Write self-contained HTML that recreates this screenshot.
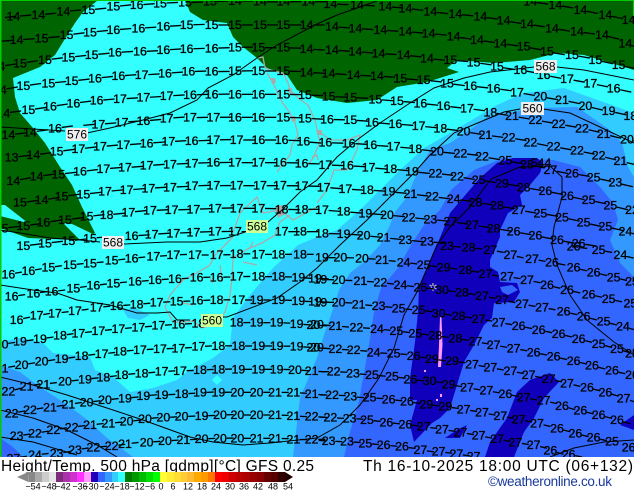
<!DOCTYPE html>
<html><head><meta charset="utf-8"><style>
html,body{margin:0;padding:0;background:#fff;width:634px;height:490px;overflow:hidden}
svg{display:block}
.q text{font-family:"Liberation Sans",sans-serif;font-size:37px;text-anchor:middle;dominant-baseline:central;fill:#000;stroke:#000;stroke-width:1}
.q polyline{fill:none;stroke:none}
.w polyline{marker:url(#w)}
.n polyline{marker:url(#n)}
.c{fill:none;stroke:#000;stroke-width:1}
.s{fill:none;stroke:#aaa;stroke-width:1.3}
.f{font-family:"Liberation Sans",sans-serif;fill:#000}
.l{font-family:"Liberation Sans",sans-serif;font-size:9px;text-anchor:middle;fill:#000}
</style></head><body>
<svg width="634" height="490" viewBox="0 0 634 490" xmlns="http://www.w3.org/2000/svg">
<defs>
<clipPath id="m"><rect x="0" y="0" width="634" height="457"/></clipPath>
<marker id="w" markerUnits="userSpaceOnUse" orient="auto" markerWidth="70" markerHeight="10" refX="0" refY="5" overflow="visible"><path d="M20 5H54" stroke="#000" stroke-width="4"/></marker>
<marker id="n" markerUnits="userSpaceOnUse" orient="auto" markerWidth="70" markerHeight="10" refX="0" refY="5" overflow="visible"><path d="M20 5H41" stroke="#000" stroke-width="4"/></marker>
</defs>
<g clip-path="url(#m)">
<rect width="634" height="457" fill="#33ffff"/>
<polygon fill="#33ccff" points="0,342 20,338 43,343 53,353 90,357 95,370 113,377 130,392 153,388 177,380 187,372 213,358 230,345 233,318 250,295 273,268 298,245 317,237 337,230 360,210 380,190 400,170 424,148 450,133 497,105 524,93 564,88 634,113 634,457 0,457"/>
<polygon fill="#33ffff" points="212,380 217,375 222,380 217,385"/>
<polygon fill="#33ccff" points="123,310 135,308 150,315 140,320 128,318"/>
<polygon fill="#3399ff" points="380,245 390,225 395,212 407,197 417,173 430,150 450,143 470,130 487,117 534,108 577,107 610,130 622,143 628,167 634,177 634,457 293,457 300,398 317,358 324,335 332,312 339,290 350,273 364,262"/>
<polygon fill="#3399ff" points="0,365 20,372 37,385 63,402 85,418 107,438 133,457 0,457"/>
<polygon fill="#3366ff" points="0,438 13,447 23,457 0,457"/>
<polygon fill="#3366ff" points="411,245 424,225 440,210 451,190 474,170 504,158 553,160 580,167 600,187 613,203 618,220 610,240 620,263 634,277 634,457 344,457 350,432 359,401 369,345 374,312 381,288 398,268"/>
<polygon fill="#1100bb" points="437,245 450,213 467,193 480,178 497,163 513,158 537,158 543,163 540,173 530,185 520,195 522,205 508,213 500,230 500,237 490,260 490,267 498,272 500,282 517,283 520,292 514,302 494,303 492,318 484,325 474,345 464,362 457,385 450,408 440,418 432,423 414,442 410,425 417,400 410,400 410,378 415,342 418,312 419,288 427,268"/>
<polygon fill="#1100bb" points="445,438 457,430 467,425 460,438"/>
<polygon fill="#1100bb" points="485,457 490,442 507,418 517,392 530,380 550,373 559,382 544,398 534,418 524,432 514,457"/>
<polygon fill="#1100bb" points="620,425 634,415 634,430"/>
<polygon fill="#3366ff" points="500,287 512,285 518,290 508,295 502,292"/>
<polygon fill="#006400" points="97,1 83,12 75,23 63,42 55,55 40,67 13,78 15,97 20,113 33,128 45,143 60,167 72,185 82,207 95,233 78,240 28,238 0,228 0,216 28,223 5,205 0,205 0,0"/>
<polygon fill="#006400" points="185,0 190,12 203,20 227,23 233,37 243,47 257,58 267,68 287,75 297,90 317,98 347,103 377,100 397,87 427,82 459,72 447,68 457,60 494,63 530,60 557,53 584,55 634,70 634,0"/>
<polygon fill="#33ffff" points="63,223 72,224 95,235 80,240"/>

<polyline class="s" points="258,58 263,57 265,68 270,70 283,73 288,83 290,90 298,98 308,105 315,120 318,135 320,142 313,158 308,165"/>
<polyline class="s" points="267,73 273,83 282,102 290,113 295,123 298,135 292,145 290,155 277,172"/>
<polyline class="s" points="312,157 317,155 318,160"/>
<polyline class="s" points="233,233 240,213 257,197 263,213 280,210 293,220 317,207"/>
<polyline class="s" points="317,130 330,140 347,140 360,135 357,150 347,170 334,170 327,190 317,203"/>
<polyline class="s" points="253,242 250,248 240,253 233,258 232,278 230,295 225,312 218,323 202,328 193,321 183,322 173,322 168,313 165,307 170,295 183,280 193,275 210,265 215,255 233,237"/>
<polyline class="s" points="220,265 222,282"/>
<polyline class="s" points="210,278 213,283"/>
<polyline class="s" points="183,303 193,305"/>
<polyline class="s" points="243,262 257,265"/>
<polyline class="s" points="250,248 262,243 275,235 280,222 290,215"/>
<polygon fill="#aaa" points="275,207 282,205 285,214 278,218"/>
<polygon fill="#aaa" points="271,78 275,78 276,83 272,84"/>
<polygon fill="#aaa" points="288,88 292,88 292,94 289,93"/>
<polygon fill="#aaa" points="291,116 295,116 296,121 292,122"/>
<polygon fill="#aaa" points="317,130 322,130 322,135 318,135"/>
<polygon fill="#ff99ff" points="440,317 441.5,317 442.5,345 441,367 438,367 439,345"/>
<rect x="424" y="370" width="2" height="2" fill="#ff99ff"/><rect x="440" y="394" width="2" height="3" fill="#ff99ff"/><rect x="436" y="399" width="2" height="2" fill="#ff99ff"/>
<text x="433" y="291" font-family="Liberation Sans" font-size="11" fill="#aaa" text-anchor="middle">✲</text>

<g class="c">
<polyline points="0,127 65,131"/>
<polyline points="87,133 110,128 143,120 170,113 197,100 208,88 233,75 257,58 277,45 317,24 337,15 377,1"/>
<polyline points="0,230 20,233 50,238 80,240 100,242"/>
<polyline points="124,244 167,242 200,242 227,238 245,232"/>
<polyline points="268,222 282,210 300,192 317,180 337,157 357,140 380,123 410,103 434,88 464,78 490,72 517,69 534,67"/>
<polyline points="557,67 584,70 634,80"/>
<polyline points="0,285 33,290 57,293 77,300 110,305 137,313 157,313 170,312 177,320 187,320 190,320"/>
<polyline points="202,317 227,317 277,298 300,282 317,268 340,245 367,220 387,200 414,173 430,155 454,133 480,122 504,112 520,109"/>
<polyline points="543,109 570,113 600,127 634,143"/>
<polyline points="0,377 33,385 67,395 113,410 143,420 190,437 213,442 243,445 270,443 317,438 340,425 360,405 379,378 394,348 404,315 417,292 437,245 450,227 470,207 491,179 520,167 550,166 562,177 562,197 554,227 552,245 557,265 570,295 587,320 614,342 634,355"/>
<polyline points="0,410 33,418 67,430 97,445 117,457"/>
<polyline points="0,437 33,442 77,455"/>
<polyline points="550,457 574,448 604,442 634,440"/>
</g>

<g class="q w" transform="scale(.33333)">
<polyline points="-5,55 40,50 115,45 190,35 265,30 340,20 410,15 480,10 555,8 630,5 705,3 780,5 850,5 925,5"/>
<text x="40" y="50">14</text><text x="115" y="45">14</text><text x="190" y="35">14</text><text x="265" y="30">15</text><text x="340" y="20">15</text><text x="410" y="15">16</text><text x="480" y="10">15</text><text x="555" y="8">15</text><text x="630" y="5">15</text><text x="705" y="3">14</text><text x="780" y="5">14</text><text x="850" y="5">14</text><text x="925" y="5">14</text>
<polyline points="-15,125 50,120 125,115 200,105 270,97 340,90 415,85 490,80 560,75 635,75 705,75 780,75 850,75 920,75"/>
<text x="50" y="120">14</text><text x="125" y="115">15</text><text x="200" y="105">15</text><text x="270" y="97">15</text><text x="340" y="90">16</text><text x="415" y="85">16</text><text x="490" y="80">16</text><text x="560" y="75">15</text><text x="635" y="75">15</text><text x="705" y="75">15</text><text x="780" y="75">15</text><text x="850" y="75">15</text><text x="920" y="75">14</text>
<polyline points="-5,200 60,190 135,180 205,172 275,165 345,158 420,155 490,150 560,147 635,145 705,142 775,143 850,143 920,147"/>
<text x="-5" y="200">14</text><text x="60" y="190">15</text><text x="135" y="180">15</text><text x="205" y="172">15</text><text x="275" y="165">15</text><text x="345" y="158">16</text><text x="420" y="155">16</text><text x="490" y="150">16</text><text x="560" y="147">16</text><text x="635" y="145">16</text><text x="705" y="142">15</text><text x="775" y="143">15</text><text x="850" y="143">15</text><text x="920" y="147">14</text>
<polyline points="0,270 70,258 145,250 215,243 285,235 355,228 425,225 495,220 565,215 635,215 705,213 775,213 850,213 920,217"/>
<text x="0" y="270">14</text><text x="70" y="258">15</text><text x="145" y="250">15</text><text x="215" y="243">15</text><text x="285" y="235">16</text><text x="355" y="228">16</text><text x="425" y="225">17</text><text x="495" y="220">16</text><text x="565" y="215">16</text><text x="635" y="215">16</text><text x="705" y="213">15</text><text x="775" y="213">15</text><text x="850" y="213">15</text><text x="920" y="217">14</text>
<polyline points="10,340 85,330 150,320 220,310 290,302 360,297 430,293 500,288 570,285 635,283 705,283 775,283 850,283 915,285"/>
<text x="10" y="340">14</text><text x="85" y="330">15</text><text x="150" y="320">16</text><text x="220" y="310">16</text><text x="290" y="302">16</text><text x="360" y="297">17</text><text x="430" y="293">17</text><text x="500" y="288">17</text><text x="570" y="285">16</text><text x="635" y="283">16</text><text x="705" y="283">16</text><text x="775" y="283">16</text><text x="850" y="283">15</text><text x="915" y="285">15</text>
<polyline points="25,405 90,397 165,385 230,378 295,373 365,367 430,363 500,355 570,353 640,352 705,352 775,352 850,352 915,355"/>
<text x="25" y="405">14</text><text x="90" y="397">14</text><text x="165" y="385">16</text><text x="295" y="373">17</text><text x="365" y="367">17</text><text x="430" y="363">16</text><text x="500" y="355">17</text><text x="570" y="353">17</text><text x="640" y="352">17</text><text x="705" y="352">16</text><text x="775" y="352">16</text><text x="850" y="352">15</text><text x="915" y="355">15</text>
<polyline points="35,472 100,465 170,455 235,447 300,440 370,435 440,430 505,425 575,423 640,420 710,420 775,420 845,420 910,425"/>
<text x="35" y="472">13</text><text x="100" y="465">14</text><text x="170" y="455">15</text><text x="235" y="447">17</text><text x="300" y="440">17</text><text x="370" y="435">17</text><text x="440" y="430">16</text><text x="505" y="425">17</text><text x="575" y="423">16</text><text x="640" y="420">17</text><text x="710" y="420">17</text><text x="775" y="420">16</text><text x="845" y="420">16</text><text x="910" y="425">16</text>
<polyline points="40,543 110,530 175,523 240,515 310,507 375,503 440,497 510,493 575,490 640,488 705,488 775,488 840,488 905,490"/>
<text x="40" y="543">14</text><text x="110" y="530">14</text><text x="175" y="523">15</text><text x="240" y="515">16</text><text x="310" y="507">17</text><text x="375" y="503">17</text><text x="440" y="497">17</text><text x="510" y="493">17</text><text x="575" y="490">17</text><text x="640" y="488">16</text><text x="705" y="488">17</text><text x="775" y="488">17</text><text x="840" y="488">16</text><text x="905" y="490">16</text>
<polyline points="60,608 125,600 185,590 250,583 315,575 380,570 445,565 510,562 575,558 640,557 710,557 780,557 840,557 905,558"/>
<text x="60" y="608">15</text><text x="125" y="600">14</text><text x="185" y="590">15</text><text x="250" y="583">15</text><text x="315" y="575">17</text><text x="380" y="570">17</text><text x="445" y="565">17</text><text x="510" y="562">17</text><text x="575" y="558">17</text><text x="640" y="557">17</text><text x="710" y="557">17</text><text x="780" y="557">17</text><text x="840" y="557">17</text><text x="905" y="558">17</text>
<polyline points="5,685 70,678 130,668 195,660 260,650 320,645 385,637 450,632 515,630 580,628 645,625 710,625 775,625 845,628 905,628"/>
<text x="5" y="685">15</text><text x="70" y="678">15</text><text x="130" y="668">16</text><text x="195" y="660">15</text><text x="260" y="650">15</text><text x="320" y="645">18</text><text x="385" y="637">17</text><text x="450" y="632">17</text><text x="515" y="630">17</text><text x="580" y="628">17</text><text x="645" y="625">17</text><text x="710" y="625">17</text><text x="775" y="625">17</text><text x="845" y="628">18</text><text x="905" y="628">18</text>
<polyline points="70,738 135,730 205,723 270,715 395,708 455,703 520,700 580,697 645,695 705,695 845,695 900,695"/>
<text x="70" y="738">15</text><text x="135" y="730">15</text><text x="205" y="723">15</text><text x="270" y="715">15</text><text x="395" y="708">16</text><text x="455" y="703">17</text><text x="520" y="700">17</text><text x="580" y="697">17</text><text x="645" y="695">17</text><text x="705" y="695">17</text><text x="845" y="695">17</text><text x="900" y="695">18</text>
</g>

<g class="q w" transform="translate(317,0) scale(.33333)">
<polyline points="640,5 715,15 790,30 865,45 935,60"/>
<text x="640" y="5">14</text><text x="715" y="15">14</text><text x="790" y="30">14</text><text x="865" y="45">14</text><text x="935" y="60">14</text>
<polyline points="40,12 120,15 205,20 265,25 340,35 415,42 490,50 560,62 630,72 705,85 780,95 855,105 925,130"/>
<text x="40" y="12">14</text><text x="120" y="15">14</text><text x="205" y="20">14</text><text x="265" y="25">14</text><text x="340" y="35">14</text><text x="415" y="42">14</text><text x="490" y="50">14</text><text x="560" y="62">14</text><text x="630" y="72">14</text><text x="705" y="85">14</text><text x="780" y="95">14</text><text x="855" y="105">14</text><text x="925" y="130">14</text>
<polyline points="45,80 115,85 190,90 265,95 335,100 410,110 480,120 550,130 620,140 690,155 765,165 835,180 905,195"/>
<text x="45" y="80">14</text><text x="115" y="85">14</text><text x="190" y="90">14</text><text x="265" y="95">14</text><text x="335" y="100">14</text><text x="410" y="110">14</text><text x="480" y="120">14</text><text x="550" y="130">14</text><text x="620" y="140">15</text><text x="690" y="155">15</text><text x="765" y="165">15</text><text x="835" y="180">15</text><text x="905" y="195">15</text>
<polyline points="45,150 115,155 185,160 260,165 330,175 400,180 470,187 540,200 610,210 680,225 750,237 820,250 890,265"/>
<text x="45" y="150">14</text><text x="115" y="155">14</text><text x="185" y="160">14</text><text x="260" y="165">14</text><text x="330" y="175">14</text><text x="400" y="180">15</text><text x="470" y="187">15</text><text x="540" y="200">15</text><text x="610" y="210">16</text><text x="680" y="225">16</text><text x="750" y="237">17</text><text x="820" y="250">17</text><text x="890" y="265">16</text>
<polyline points="35,220 110,225 180,228 250,235 320,240 390,250 460,258 530,265 600,277 670,290 735,300 805,318 875,333 940,348"/>
<text x="35" y="220">14</text><text x="110" y="225">14</text><text x="180" y="228">14</text><text x="250" y="235">15</text><text x="320" y="240">15</text><text x="390" y="250">15</text><text x="460" y="258">16</text><text x="530" y="265">16</text><text x="600" y="277">17</text><text x="670" y="290">20</text><text x="735" y="300">21</text><text x="805" y="318">20</text><text x="875" y="333">19</text><text x="940" y="348">18</text>
<polyline points="35,290 100,292 175,298 240,303 310,310 380,318 450,325 520,337 585,348 655,360 725,372 795,385 860,402 930,418"/>
<text x="35" y="290">15</text><text x="100" y="292">15</text><text x="175" y="298">15</text><text x="240" y="303">15</text><text x="310" y="310">16</text><text x="380" y="318">16</text><text x="450" y="325">17</text><text x="520" y="337">18</text><text x="585" y="348">21</text><text x="655" y="360">22</text><text x="725" y="372">22</text><text x="795" y="385">22</text><text x="860" y="402">21</text><text x="930" y="418">20</text>
<polyline points="30,358 100,360 165,367 235,372 305,378 370,385 440,395 505,405 575,413 640,427 710,440 780,452 845,467 910,483"/>
<text x="30" y="358">16</text><text x="100" y="360">15</text><text x="165" y="367">16</text><text x="235" y="372">16</text><text x="305" y="378">17</text><text x="370" y="385">18</text><text x="440" y="395">20</text><text x="505" y="405">21</text><text x="575" y="413">22</text><text x="640" y="427">22</text><text x="710" y="440">22</text><text x="780" y="452">22</text><text x="845" y="467">22</text><text x="910" y="483">21</text>
<polyline points="25,428 95,430 160,435 230,440 295,447 360,455 430,460 495,470 565,482 630,493 700,510 765,520 830,533 895,548"/>
<text x="25" y="428">16</text><text x="95" y="430">16</text><text x="160" y="435">16</text><text x="230" y="440">17</text><text x="295" y="447">18</text><text x="360" y="455">20</text><text x="430" y="460">22</text><text x="495" y="470">22</text><text x="565" y="482">25</text><text x="630" y="493">28</text><text x="672" y="489">544</text><text x="700" y="510">27</text><text x="765" y="520">26</text><text x="830" y="533">25</text><text x="895" y="548">23</text>
<polyline points="25,495 90,497 155,503 220,507 285,515 355,520 420,530 485,540 555,550 620,562 685,573 750,588 815,600 880,617 945,630"/>
<text x="25" y="495">17</text><text x="90" y="497">16</text><text x="155" y="503">17</text><text x="220" y="507">18</text><text x="285" y="515">19</text><text x="355" y="520">22</text><text x="420" y="530">22</text><text x="485" y="540">25</text><text x="555" y="550">29</text><text x="620" y="562">28</text><text x="685" y="573">26</text><text x="750" y="588">26</text><text x="815" y="600">25</text><text x="880" y="617">25</text><text x="945" y="630">22</text>
<polyline points="20,562 85,567 150,570 215,575 280,582 345,590 410,597 475,607 540,617 605,630 670,640 735,652 800,668 865,680 925,695"/>
<text x="20" y="562">17</text><text x="85" y="567">17</text><text x="150" y="570">18</text><text x="215" y="575">19</text><text x="280" y="582">21</text><text x="345" y="590">22</text><text x="410" y="597">24</text><text x="475" y="607">28</text><text x="540" y="617">28</text><text x="605" y="630">27</text><text x="670" y="640">25</text><text x="735" y="652">25</text><text x="800" y="668">25</text><text x="865" y="680">25</text><text x="925" y="695">24</text>
<polyline points="15,630 80,635 145,640 210,645 275,652 340,658 400,665 465,675 530,685 590,695 655,707 720,720 785,730"/>
<text x="15" y="630">17</text><text x="80" y="635">18</text><text x="145" y="640">19</text><text x="210" y="645">20</text><text x="275" y="652">22</text><text x="340" y="658">23</text><text x="400" y="665">27</text><text x="465" y="675">27</text><text x="530" y="685">28</text><text x="590" y="695">26</text><text x="655" y="707">26</text><text x="720" y="720">26</text><text x="785" y="730">26</text>
<polyline points="15,700 80,702 140,707 200,713 265,720 330,725"/>
<text x="15" y="700">18</text><text x="80" y="702">19</text><text x="140" y="707">20</text><text x="200" y="713">21</text><text x="265" y="720">23</text><text x="330" y="725">23</text>
</g>

<g class="q n" transform="translate(0,245) scale(.33333)">
<polyline points="25,88 85,78 145,68 210,60 270,55 335,47 395,40 460,35 520,30 585,30 650,30 710,27 775,28 835,28 900,28"/>
<text x="25" y="88">16</text><text x="85" y="78">16</text><text x="145" y="68">15</text><text x="210" y="60">15</text><text x="270" y="55">15</text><text x="335" y="47">15</text><text x="395" y="40">16</text><text x="460" y="35">17</text><text x="520" y="30">17</text><text x="585" y="30">17</text><text x="650" y="30">17</text><text x="710" y="27">18</text><text x="775" y="28">17</text><text x="835" y="28">18</text><text x="900" y="28">18</text>
<polyline points="35,155 100,145 155,140 220,130 280,122 340,115 405,110 465,105 525,102 590,98 650,97 710,95 775,95 835,95 895,98 945,100"/>
<text x="35" y="155">16</text><text x="100" y="145">16</text><text x="155" y="140">16</text><text x="220" y="130">15</text><text x="280" y="122">16</text><text x="340" y="115">15</text><text x="405" y="110">16</text><text x="465" y="105">16</text><text x="525" y="102">16</text><text x="590" y="98">16</text><text x="650" y="97">16</text><text x="710" y="95">17</text><text x="775" y="95">18</text><text x="835" y="95">18</text><text x="895" y="98">19</text><text x="945" y="100">19</text>
<polyline points="50,225 110,212 165,205 225,198 290,188 350,183 410,178 470,173 530,170 590,167 650,165 715,165 770,165 835,165 895,168 945,170"/>
<text x="50" y="225">16</text><text x="110" y="212">17</text><text x="165" y="205">17</text><text x="225" y="198">17</text><text x="290" y="188">17</text><text x="350" y="183">16</text><text x="410" y="178">18</text><text x="470" y="173">17</text><text x="530" y="170">15</text><text x="590" y="167">16</text><text x="650" y="165">18</text><text x="715" y="165">17</text><text x="770" y="165">19</text><text x="835" y="165">19</text><text x="895" y="168">19</text><text x="945" y="170">19</text>
<polyline points="5,298 60,290 120,282 180,272 235,265 295,258 355,252 415,247 475,242 535,238 595,235 710,233 770,233 830,233 890,237 940,240"/>
<text x="5" y="298">20</text><text x="60" y="290">19</text><text x="120" y="282">19</text><text x="180" y="272">18</text><text x="235" y="265">17</text><text x="295" y="258">17</text><text x="355" y="252">17</text><text x="415" y="247">17</text><text x="475" y="242">17</text><text x="535" y="238">16</text><text x="595" y="235">18</text><text x="710" y="233">18</text><text x="770" y="233">19</text><text x="830" y="233">19</text><text x="890" y="237">19</text><text x="940" y="240">20</text>
<polyline points="5,370 65,360 125,350 185,342 245,333 305,327 360,320 420,315 480,312 535,310 595,305 655,303 715,303 775,303 830,303 890,305 940,308"/>
<text x="5" y="370">21</text><text x="65" y="360">20</text><text x="125" y="350">20</text><text x="185" y="342">19</text><text x="245" y="333">18</text><text x="305" y="327">17</text><text x="360" y="320">18</text><text x="420" y="315">17</text><text x="480" y="312">17</text><text x="535" y="310">17</text><text x="595" y="305">17</text><text x="655" y="303">18</text><text x="715" y="303">18</text><text x="775" y="303">19</text><text x="830" y="303">19</text><text x="890" y="305">19</text><text x="940" y="308">20</text>
<polyline points="25,440 80,425 130,418 195,410 255,403 310,397 365,390 425,385 485,380 540,378 600,375 655,373 715,373 775,373 830,373 885,375 935,378"/>
<text x="25" y="440">22</text><text x="80" y="425">21</text><text x="130" y="418">21</text><text x="195" y="410">20</text><text x="255" y="403">19</text><text x="310" y="397">18</text><text x="365" y="390">18</text><text x="425" y="385">18</text><text x="485" y="380">17</text><text x="540" y="378">17</text><text x="600" y="375">18</text><text x="655" y="373">18</text><text x="715" y="373">19</text><text x="775" y="373">19</text><text x="830" y="373">19</text><text x="885" y="375">20</text><text x="935" y="378">21</text>
<polyline points="35,505 90,495 150,487 205,478 260,472 315,465 375,460 430,453 485,450 545,447 600,443 655,442 712,442 770,442 825,442 880,443 935,447"/>
<text x="35" y="505">22</text><text x="90" y="495">22</text><text x="150" y="487">21</text><text x="205" y="478">21</text><text x="260" y="472">20</text><text x="315" y="465">20</text><text x="375" y="460">19</text><text x="430" y="453">19</text><text x="485" y="450">19</text><text x="545" y="447">18</text><text x="600" y="443">19</text><text x="655" y="442">19</text><text x="712" y="442">20</text><text x="770" y="442">20</text><text x="825" y="442">21</text><text x="880" y="443">21</text><text x="935" y="447">21</text>
<polyline points="50,573 105,565 160,555 215,547 270,540 325,535 380,530 435,522 490,518 545,515 605,513 660,510 712,510 770,510 825,510 880,513 935,515"/>
<text x="50" y="573">23</text><text x="105" y="565">22</text><text x="160" y="555">22</text><text x="215" y="547">22</text><text x="270" y="540">21</text><text x="325" y="535">21</text><text x="380" y="530">20</text><text x="435" y="522">20</text><text x="490" y="518">20</text><text x="545" y="515">20</text><text x="605" y="513">19</text><text x="660" y="510">20</text><text x="712" y="510">20</text><text x="770" y="510">20</text><text x="825" y="510">21</text><text x="880" y="513">21</text><text x="935" y="515">22</text>
<polyline points="40,640 105,630 170,625 225,615 280,608 335,603 375,597 440,592 495,588 550,585 605,582 660,580 712,580 770,580 825,580 880,583 935,583"/>
<text x="40" y="640">27</text><text x="105" y="630">24</text><text x="170" y="625">23</text><text x="225" y="615">23</text><text x="280" y="608">22</text><text x="335" y="603">22</text><text x="375" y="597">21</text><text x="440" y="592">20</text><text x="495" y="588">20</text><text x="550" y="585">21</text><text x="605" y="582">20</text><text x="660" y="580">20</text><text x="712" y="580">20</text><text x="770" y="580">21</text><text x="825" y="580">21</text><text x="880" y="583">21</text><text x="935" y="583">22</text>
</g>

<g class="q n" transform="translate(317,245) scale(.33333)">
<polyline points="390,3 455,8 520,15 580,30 645,42 705,52 770,68 830,82 890,97 945,110"/>
<text x="390" y="3">23</text><text x="455" y="8">28</text><text x="520" y="15">27</text><text x="580" y="30">27</text><text x="645" y="42">27</text><text x="705" y="52">26</text><text x="770" y="68">26</text><text x="830" y="82">26</text><text x="890" y="97">25</text><text x="945" y="110">25</text>
<polyline points="770,5 845,15 910,30"/>
<text x="770" y="5">26</text><text x="845" y="15">25</text><text x="910" y="30">24</text>
<polyline points="15,38 70,38 135,40 195,45 260,52 320,60 380,67 445,75 505,87 570,95 630,105 690,120 750,135 815,148 875,162 940,175"/>
<text x="15" y="38">19</text><text x="70" y="38">20</text><text x="135" y="40">20</text><text x="195" y="45">21</text><text x="260" y="52">24</text><text x="320" y="60">25</text><text x="380" y="67">29</text><text x="445" y="75">28</text><text x="505" y="87">27</text><text x="570" y="95">27</text><text x="630" y="105">27</text><text x="690" y="120">26</text><text x="750" y="135">26</text><text x="815" y="148">26</text><text x="875" y="162">25</text><text x="940" y="175">25</text>
<polyline points="10,103 65,105 130,108 190,113 250,120 310,127 375,135 435,143 495,153 555,165 615,177 675,187 740,200 800,215 860,230 918,245"/>
<text x="10" y="103">19</text><text x="65" y="105">20</text><text x="130" y="108">21</text><text x="190" y="113">22</text><text x="250" y="120">24</text><text x="310" y="127">26</text><text x="375" y="135">30</text><text x="435" y="143">28</text><text x="495" y="153">27</text><text x="555" y="165">27</text><text x="615" y="177">27</text><text x="675" y="187">27</text><text x="740" y="200">26</text><text x="800" y="215">26</text><text x="860" y="230">25</text><text x="918" y="245">24</text>
<polyline points="10,172 65,172 125,178 185,183 245,190 305,195 365,205 425,213 485,222 545,232 605,243 665,255 725,267 785,282 845,297 900,312 945,325"/>
<text x="10" y="172">19</text><text x="65" y="172">20</text><text x="125" y="178">21</text><text x="185" y="183">23</text><text x="245" y="190">25</text><text x="305" y="195">25</text><text x="365" y="205">30</text><text x="425" y="213">28</text><text x="485" y="222">27</text><text x="545" y="232">27</text><text x="605" y="243">26</text><text x="665" y="255">26</text><text x="725" y="267">26</text><text x="785" y="282">26</text><text x="845" y="297">25</text><text x="900" y="312">25</text><text x="945" y="325">25</text>
<polyline points="0,238 55,243 118,247 180,252 238,258 295,265 355,272 415,280 475,290 530,300 590,310 650,322 710,335 770,348 825,362 885,377 945,390"/>
<text x="0" y="238">20</text><text x="55" y="243">21</text><text x="118" y="247">22</text><text x="180" y="252">24</text><text x="238" y="258">25</text><text x="295" y="265">25</text><text x="355" y="272">28</text><text x="415" y="280">28</text><text x="475" y="290">27</text><text x="530" y="300">27</text><text x="590" y="310">27</text><text x="650" y="322">26</text><text x="710" y="335">26</text><text x="770" y="348">26</text><text x="825" y="362">26</text><text x="885" y="377">26</text><text x="945" y="390">26</text>
<polyline points="0,308 55,312 110,315 170,322 230,325 290,333 345,342 405,348 465,358 520,368 580,378 635,390 695,402 750,415 810,428 865,442 920,460"/>
<text x="0" y="308">20</text><text x="55" y="312">22</text><text x="110" y="315">22</text><text x="170" y="322">24</text><text x="230" y="325">25</text><text x="290" y="333">26</text><text x="345" y="342">29</text><text x="405" y="348">29</text><text x="465" y="358">27</text><text x="520" y="368">27</text><text x="580" y="378">27</text><text x="635" y="390">27</text><text x="695" y="402">27</text><text x="750" y="415">27</text><text x="810" y="428">26</text><text x="865" y="442">26</text><text x="920" y="460">27</text>
<polyline points="-5,380 50,380 108,385 165,390 225,395 280,403 338,408 395,418 450,428 508,437 565,447 620,458 680,467 735,483 790,497 845,510 900,525"/>
<text x="50" y="380">22</text><text x="108" y="385">23</text><text x="165" y="390">25</text><text x="225" y="395">25</text><text x="280" y="403">26</text><text x="338" y="408">30</text><text x="395" y="418">29</text><text x="450" y="428">27</text><text x="508" y="437">27</text><text x="565" y="447">26</text><text x="620" y="458">27</text><text x="680" y="467">27</text><text x="735" y="483">26</text><text x="790" y="497">26</text><text x="845" y="510">26</text><text x="900" y="525">26</text>
<polyline points="-10,450 45,450 100,455 158,458 215,463 270,470 328,478 385,485 440,493 495,503 550,513 605,523 660,535 720,550 775,565 830,578"/>
<text x="45" y="450">22</text><text x="100" y="455">23</text><text x="158" y="458">25</text><text x="215" y="463">26</text><text x="270" y="470">26</text><text x="328" y="478">29</text><text x="385" y="485">29</text><text x="440" y="493">27</text><text x="495" y="503">27</text><text x="550" y="513">27</text><text x="605" y="523">27</text><text x="660" y="535">27</text><text x="720" y="550">26</text><text x="775" y="565">26</text><text x="830" y="578">26</text>
<polyline points="-10,515 40,518 98,520 150,525 208,532 265,538 320,545 375,553 430,562 485,572 540,582 595,592 650,600 700,617 755,628"/>
<text x="40" y="518">22</text><text x="98" y="520">23</text><text x="150" y="525">25</text><text x="208" y="532">26</text><text x="265" y="538">26</text><text x="320" y="545">27</text><text x="375" y="553">27</text><text x="430" y="562">27</text><text x="485" y="572">27</text><text x="540" y="582">27</text><text x="595" y="592">27</text><text x="650" y="600">27</text><text x="700" y="617">26</text><text x="755" y="628">26</text>
<polyline points="-15,585 35,588 90,590 145,595 200,600 255,605 310,615 365,620 418,627 470,635"/>
<text x="35" y="588">23</text><text x="90" y="590">23</text><text x="145" y="595">25</text><text x="200" y="600">26</text><text x="255" y="605">26</text><text x="310" y="615">27</text><text x="365" y="620">27</text><text x="418" y="627">27</text><text x="470" y="635">27</text>
<text x="885" y="590">25</text><text x="935" y="608">26</text>
</g>

<g font-family="Liberation Sans,sans-serif" font-size="12" text-anchor="middle">
<rect x="66" y="128" width="22" height="13" fill="#eee"/><text x="77" y="138.500">576</text>
<rect x="102" y="236" width="22" height="13" fill="#eee"/><text x="113" y="246.500">568</text>
<rect x="246" y="220" width="22" height="13" fill="#ccff99"/><text x="257" y="230.500">568</text>
<rect x="534" y="60" width="23" height="13" fill="#eee"/><text x="545.500" y="70.500">568</text>
<rect x="521" y="102" width="23" height="13" fill="#eee"/><text x="532.500" y="112.500">560</text>
<rect x="201" y="314" width="22" height="13" fill="#ccff99"/><text x="212" y="324.500">560</text>
</g>
</g>
<rect x="0" y="0" width="634" height="1" fill="#00cc00"/>
<rect x="0" y="0" width="1.500" height="457" fill="#00cc00"/>
<rect x="633" y="0" width="1" height="16" fill="#00cc00"/>

<text class="f" x="1" y="471" font-size="15.500" textLength="313" lengthAdjust="spacing">Height/Temp. 500 hPa [gdmp][°C] GFS 0.25</text>
<text class="f" x="363" y="471" font-size="15.500" textLength="270" lengthAdjust="spacing">Th 16-10-2025 18:00 UTC (06+132)</text>
<text class="f" x="488" y="486" font-size="13.500" textLength="124" lengthAdjust="spacing" style="fill:#1a3a9c">©weatheronline.co.uk</text>

<g shape-rendering="crispEdges">
<rect x="28.300" y="472" width="7" height="10" fill="#888"/><rect x="35.200" y="472" width="7" height="10" fill="#aaa"/><rect x="42.100" y="472" width="7" height="10" fill="#ccc"/><rect x="49" y="472" width="7" height="10" fill="#e5e5e5"/><rect x="56" y="472" width="7" height="10" fill="#7b2d7b"/><rect x="63" y="472" width="7" height="10" fill="#aa33aa"/><rect x="70" y="472" width="7" height="10" fill="#cc33cc"/><rect x="77" y="472" width="7" height="10" fill="#ff33ff"/><rect x="84" y="472" width="7" height="10" fill="#ff99ff"/><rect x="91" y="472" width="7" height="10" fill="#2200bb"/><rect x="98" y="472" width="7" height="10" fill="#3366ff"/><rect x="105" y="472" width="7" height="10" fill="#3399ff"/><rect x="112" y="472" width="7" height="10" fill="#33ccff"/><rect x="118" y="472" width="7" height="10" fill="#33ffff"/><rect x="125" y="472" width="7" height="10" fill="#007700"/><rect x="132" y="472" width="7" height="10" fill="#009900"/><rect x="139" y="472" width="7" height="10" fill="#00bb00"/><rect x="146" y="472" width="7" height="10" fill="#00dd00"/><rect x="153" y="472" width="7" height="10" fill="#00ff00"/><rect x="160" y="472" width="7" height="10" fill="#ffff33"/><rect x="167" y="472" width="7" height="10" fill="#ffee33"/><rect x="174" y="472" width="7" height="10" fill="#ffdd33"/><rect x="181" y="472" width="7" height="10" fill="#ffcc33"/><rect x="187" y="472" width="7" height="10" fill="#ffbb33"/><rect x="194" y="472" width="7" height="10" fill="#ffaa00"/><rect x="201" y="472" width="7" height="10" fill="#ff9900"/><rect x="208" y="472" width="7" height="10" fill="#ff7700"/><rect x="215" y="472" width="7" height="10" fill="#ff0000"/><rect x="222" y="472" width="7" height="10" fill="#ee0000"/><rect x="229" y="472" width="7" height="10" fill="#cc0000"/><rect x="236" y="472" width="7" height="10" fill="#bb0000"/><rect x="243" y="472" width="7" height="10" fill="#aa0000"/><rect x="250" y="472" width="7" height="10" fill="#990000"/><rect x="257" y="472" width="7" height="10" fill="#880000"/><rect x="264" y="472" width="7" height="10" fill="#660000"/><rect x="271" y="472" width="7" height="10" fill="#550000"/><rect x="278" y="472" width="7" height="10" fill="#330000"/>
</g>
<polygon points="28.300,472 28.300,482 17,477" fill="#888"/>
<polygon points="285,472 285,482 293,477" fill="#220000"/>
<g class="l">
<text class="l" x="33" y="489.500">−54</text><text class="l" x="49" y="489.500">−48</text><text class="l" x="63" y="489.500">−42</text><text class="l" x="80" y="489.500">−36</text><text class="l" x="91" y="489.500">−30</text><text class="l" x="107" y="489.500">−24</text><text class="l" x="122" y="489.500">−18</text><text class="l" x="137" y="489.500">−12</text><text class="l" x="150" y="489.500">−6</text><text class="l" x="161" y="489.500">0</text><text class="l" x="173" y="489.500">6</text><text class="l" x="188" y="489.500">12</text><text class="l" x="202" y="489.500">18</text><text class="l" x="216" y="489.500">24</text><text class="l" x="230" y="489.500">30</text><text class="l" x="244" y="489.500">36</text><text class="l" x="258" y="489.500">42</text><text class="l" x="273" y="489.500">48</text><text class="l" x="288" y="489.500">54</text>
</g>
</svg>
</body></html>
